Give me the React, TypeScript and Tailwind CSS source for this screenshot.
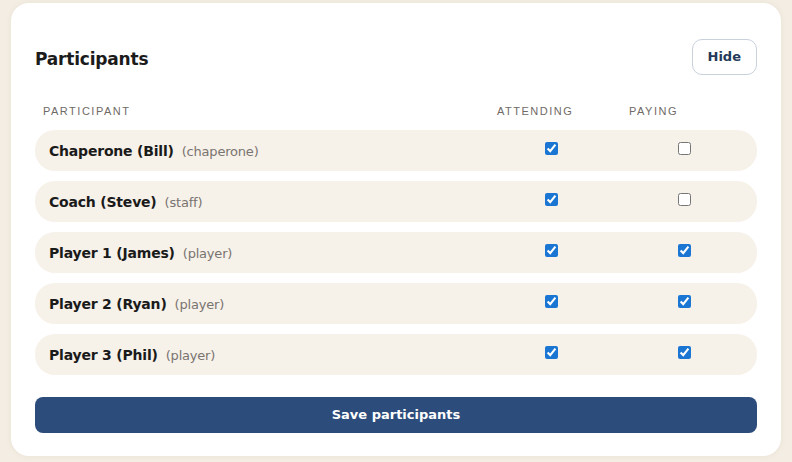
import { useState } from "react";

type Person = { name: string; role: string; attending: boolean; paying: boolean };

const initial: Person[] = [
  { name: "Chaperone (Bill)", role: "chaperone", attending: true, paying: false },
  { name: "Coach (Steve)", role: "staff", attending: true, paying: false },
  { name: "Player 1 (James)", role: "player", attending: true, paying: true },
  { name: "Player 2 (Ryan)", role: "player", attending: true, paying: true },
  { name: "Player 3 (Phil)", role: "player", attending: true, paying: true },
];

export default function App() {
  const [people, setPeople] = useState(initial);

  const toggle = (i: number, key: "attending" | "paying") =>
    setPeople((p) => p.map((x, j) => (j === i ? { ...x, [key]: !x[key] } : x)));

  return (
    <div className="min-h-screen bg-[#f3ede3] pl-[11px] pr-[11px] pt-[3px] font-['DejaVu_Sans',sans-serif]">
      <div className="bg-white rounded-[18px] px-[24px] pt-[36px] pb-[23px] shadow-[0_0_6px_rgba(120,100,60,0.08)]">
        {/* Header */}
        <div className="flex items-center justify-between">
          <h2 className="pt-[5px] text-[17px] font-bold text-[#1b1b1b] tracking-[-0.2px]">Participants</h2>
          <button className="h-[36px] px-[15px] rounded-[10px] border border-[#c9d1dc] text-[13px] font-bold text-[#253a5a]">
            Hide
          </button>
        </div>

        {/* Column headers */}
        <div className="grid grid-cols-[1fr_132px_140px] mt-[28px] mb-[10px] text-[11px] tracking-[1.5px] text-[#6f6a66] font-['Liberation_Sans',sans-serif]">
          <div className="pl-[8px]">PARTICIPANT</div>
          <div className="pl-[12px]">ATTENDING</div>
          <div className="pl-[12px]">PAYING</div>
        </div>

        {/* Rows */}
        <div className="flex flex-col gap-[10px]">
          {people.map((p, i) => (
            <div
              key={p.name}
              className="grid grid-cols-[1fr_132px_134px] pr-[6px] items-center h-[41px] rounded-[20px] bg-[#f6f1e9]"
            >
              <div className="pl-[14px] pt-[3px] flex items-baseline gap-[8px]">
                <span className="text-[14px] font-bold text-[#1a1a1a] tracking-[-0.2px]">{p.name}</span>
                <span className="text-[13px] text-[#7a7470] tracking-[-0.2px]">({p.role})</span>
              </div>
              <div className="flex justify-center -mt-[4px]">
                <input
                  type="checkbox"
                  checked={p.attending}
                  onChange={() => toggle(i, "attending")}
                  className="w-[13px] h-[13px] m-0 accent-[#1b76d3]"
                />
              </div>
              <div className="flex justify-center -mt-[4px]">
                <input
                  type="checkbox"
                  checked={p.paying}
                  onChange={() => toggle(i, "paying")}
                  className="w-[13px] h-[13px] m-0 accent-[#1b76d3]"
                />
              </div>
            </div>
          ))}
        </div>

        <button className="mt-[22px] w-full h-[36px] rounded-[8px] bg-[#2c4c7b] text-white text-[13px] font-bold">
          Save participants
        </button>
      </div>
    </div>
  );
}
